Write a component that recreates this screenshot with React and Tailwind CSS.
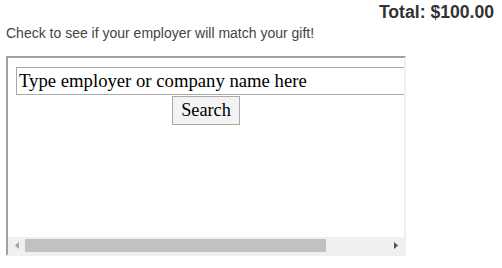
export default function App() {
  return (
    <div className="w-[502px] h-[268px] bg-white overflow-hidden" style={{ fontFamily: '"Liberation Sans", Arial, sans-serif' }}>
      <div className="flex justify-end pr-[8px] pt-[2px]">
        <p className="text-[17.6px] font-bold text-[#333] leading-[20px]">Total: $100.00</p>
      </div>

      <p className="mt-[3px] pl-[6px] text-[14px] text-[#444] leading-[16px]">
        Check to see if your employer will match your gift!
      </p>

      <div className="ml-[6px] mt-[15px] w-[400px] h-[200px] flex flex-col border-2 border-t-[#a0a0a0] border-l-[#a0a0a0] border-r-[#f0f0f0] border-b-[#f0f0f0]">
        <div
          className="h-[179px] overflow-hidden flex flex-col items-center pt-[9px]"
          style={{ fontFamily: '"Liberation Serif", "Times New Roman", serif' }}
        >
          <input
            readOnly
            value="Type employer or company name here"
            className="self-start shrink-0 ml-[8px] w-[420px] h-[28px] border border-[#a9a9a9] px-[2px] text-[18.7px] text-black outline-none"
          />
          <button className="mt-[1px] h-[29px] px-[8px] border border-[#a9a9a9] bg-[#f3f3f3] text-[18.3px] text-black leading-none">
            Search
          </button>
        </div>

        <div className="h-[17px] bg-[#f0f0f0] flex items-center">
          <div className="w-[17px] h-full flex items-center justify-center">
            <svg width="4" height="7" viewBox="0 0 4 7">
              <path d="M4 0 L0 3.5 L4 7 Z" fill="#a3a3a3" />
            </svg>
          </div>
          <div className="w-[301px] h-[13px] bg-[#c1c1c1]" />
          <div className="flex-1" />
          <div className="w-[17px] h-full flex items-center justify-center">
            <svg width="4" height="7" viewBox="0 0 4 7">
              <path d="M0 0 L4 3.5 L0 7 Z" fill="#505050" />
            </svg>
          </div>
        </div>
      </div>
    </div>
  );
}
